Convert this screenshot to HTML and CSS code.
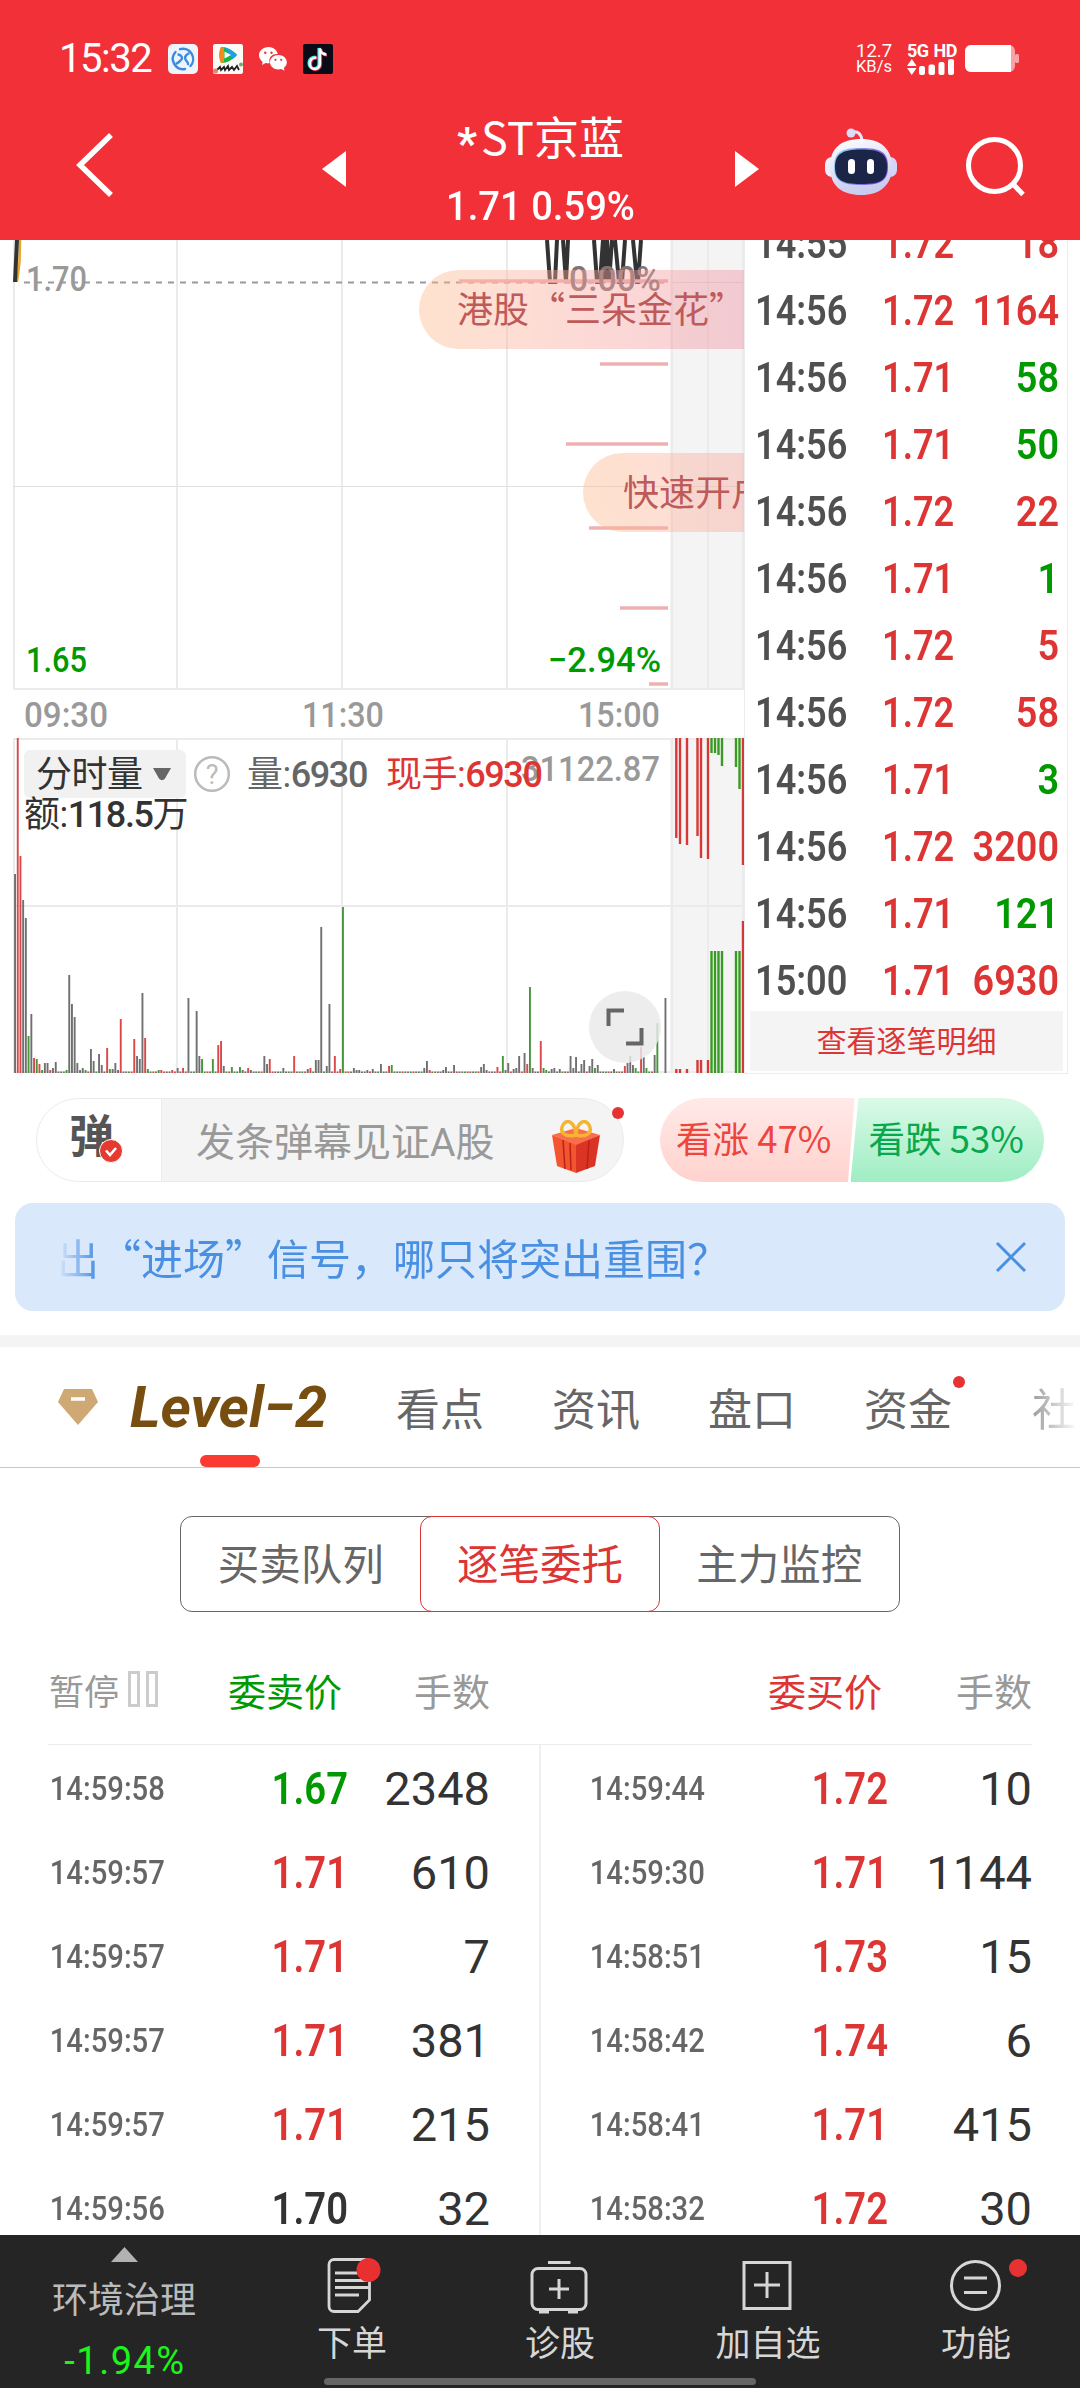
FILE: index.html
```
<!DOCTYPE html>
<html lang="zh-CN">
<head>
  <meta charset="UTF-8" />
  <title>*ST京蓝 - 分时</title>
  <link rel="stylesheet" href="styles.css">
</head>
<body>

  <header class="header">
    <div class="statusbar">
      <span class="clock">15:32</span>
      <svg class="app" width="30" height="30" viewBox="0 0 30 30">
        <rect width="30" height="30" rx="5" fill="#eef4fb"/>
        <g fill="none" stroke="#3c8ae0" stroke-width="2.4" stroke-linecap="round">
          <path d="M12 5.200A10.300 10.300 0 0 1 22.500 22"/>
          <path d="M17 25A10.300 10.300 0 0 1 7.500 8"/>
          <path d="M10.500 10.500c3.500 1 4.500 3.500 2.500 5.500s-2.500 3-4.500 3.500"/>
          <path d="M20.500 9.500c-3.500 2-4 4-3 6s3 3 2.500 4.500"/>
        </g>
      </svg>
      <svg class="app" width="30" height="30" viewBox="0 0 30 30">
        <rect width="30" height="30" rx="2" fill="#fbfaf6"/>
        <path d="M8 3c6 0 12 3.500 16 8-4 4.500-10 8-16 8-2-5-2-11 0-16z" fill="#17b63c"/>
        <path d="M8 3C5.500 8 5.500 14 8 19l3-1V4z" fill="#f58a1c"/>
        <path d="M11 3.500C16 4 21 8 24 11l-5 4.500-2-5z" fill="#1ba0f0"/>
        <path d="M11.500 7.500l6.500 3.500-6.500 3.500z" fill="#fff"/>
        <path d="M4 26l3-3 1 3 3-3 1 3 3-4 1 4 3-3 2 3 3-4 2 4" fill="none" stroke="#222" stroke-width="1.800"/>
        <circle cx="2.500" cy="27" r="2.500" fill="#dc8a78"/>
        <circle cx="28" cy="20.500" r="2" fill="#7da36a"/>
      </svg>
      <svg class="app" width="30" height="30" viewBox="0 0 30 30">
        <path d="M10.500 3C5 3 1 6.700 1 11.300c0 2.600 1.400 4.900 3.600 6.400L4 21l3.700-1.900c4 1 .5 0 4 .2C10 12.500 15 9.700 19.800 10 19 6 15.200 3 10.500 3z" fill="#fff"/>
        <path d="M20.400 11c-4.700 0-8.400 3.200-8.400 7.200s3.700 7.200 8.400 7.200c1 0 2-.1 2.900-.4l3.200 1.700-.7-2.900c1.900-1.400 3-3.300 3-5.600 0-4-3.700-7.200-8.400-7.200z" fill="#fff"/>
        <g fill="#f13038"><circle cx="7.300" cy="8.800" r="1.200"/><circle cx="13.500" cy="8.800" r="1.200"/><circle cx="17.500" cy="15.800" r="1.100"/><circle cx="23.200" cy="15.800" r="1.100"/></g>
      </svg>
      <svg class="app" width="30" height="30" viewBox="0 0 30 30">
        <rect width="30" height="30" rx="2" fill="#0b0b18"/>
        <g fill="none" stroke-width="3.200">
          <path d="M12.500 13c-4 0-6.500 2.500-6.500 6s2.500 5.500 5 5.500 5-2 5-5V4c.5 3 3 6 6.500 6" stroke="#25e8e4"/>
          <path d="M14 14c-4 0-6.500 2.500-6.500 6s2.500 5.500 5 5.500 5-2 5-5V5c.5 3 3 6 6.500 6" stroke="#f6355c"/>
          <path d="M13.300 13.500c-4 0-6.500 2.500-6.500 6s2.500 5.500 5 5.500 5-2 5-5V4.500c.5 3 3 6 6.500 6" stroke="#fff" stroke-width="2.600"/>
        </g>
      </svg>
      <div class="speed"><span>12.7</span><span>KB/s</span></div>
      <div class="signal">
        <span>5G HD</span>
        <svg width="48" height="16" viewBox="0 0 48 16" fill="#fff">
          <path d="M0 7 4.800 0l4.800 7zM0 9h9.600l-4.800 7z"/>
          <rect x="12" y="7" width="6" height="9" rx="2"/><rect x="21.500" y="5.500" width="6.500" height="10.500" rx="2"/>
          <rect x="31.500" y="3" width="6" height="13" rx="2"/><rect x="41" y="0" width="6" height="16" rx="2"/>
        </svg>
      </div>
      <svg class="battery" width="55" height="28" viewBox="0 0 55 28">
        <rect width="50" height="27" rx="6" fill="#fff" opacity=".55"/>
        <rect x="50" y="9" width="4" height="9" rx="1.500" fill="#fff" opacity=".55"/>
        <path d="M6 0h40v27H6a6 6 0 0 1-6-6V6a6 6 0 0 1 6-6z" fill="#fff"/>
      </svg>
    </div>
    <div class="titlebar">
      <svg class="back" width="40" height="66" viewBox="0 0 40 66"><path d="M37 3 6 33l31 30" fill="none" stroke="#fff" stroke-width="5.500"/></svg>
      <svg class="prev" width="24" height="36"><path d="M0 18 24 0v36z" fill="#fff"/></svg>
      <div class="stock">
        <div class="name"><span class="star">*</span>ST京蓝</div>
        <div class="quote">1.71 0.59%</div>
      </div>
      <svg class="next" width="24" height="36"><path d="M24 18 0 0v36z" fill="#fff"/></svg>
      <svg class="robot" width="72" height="68" viewBox="0 0 72 68">
        <defs>
          <linearGradient id="shell" x1="0" y1="0" x2=".3" y2="1"><stop offset="0" stop-color="#fff"/><stop offset="1" stop-color="#c9cbf0"/></linearGradient>
          <linearGradient id="rim" x1="0" y1="0" x2="1" y2=".3"><stop offset="0" stop-color="#8fdcf5"/><stop offset="1" stop-color="#7a49d8"/></linearGradient>
        </defs>
        <path d="M27 4c6-1 9 2 10 8" fill="none" stroke="#e6e4fa" stroke-width="3"/>
        <circle cx="26" cy="5" r="4.500" fill="#dddcf6"/>
        <rect x="0" y="29" width="14" height="20" rx="7" fill="#eceefb"/>
        <rect x="58" y="29" width="14" height="20" rx="7" fill="#d5d5f5"/>
        <path d="M36 11c20 0 31 10 31 28S55 67 36 67 5 58 5 39s11-28 31-28z" fill="url(#shell)"/>
        <path d="M36 20c20 0 27 4 27 19 0 14-8 18-27 18S9 53 9 39c0-15 7-19 27-19z" fill="url(#rim)"/>
        <path d="M36 21.500c19 0 26 4 26 17.500s-7 17-26 17-26-4-26-17 7-17.500 26-17.500z" fill="#1b2547"/>
        <rect x="23" y="31" width="7" height="15" rx="3.500" fill="#fff"/><rect x="42" y="31" width="7" height="15" rx="3.500" fill="#fff"/>
      </svg>
      <svg class="search" width="62" height="62" viewBox="0 0 62 62" fill="none" stroke="#fff" stroke-width="5"><circle cx="29.500" cy="29.500" r="26"/><path d="M47.500 47.500 58 58.500"/></svg>
    </div>
  </header>

  <main>
    <section class="market">
      <svg class="chart" id="chart" width="731" height="835" viewBox="13 240 731 835">
        <defs>
          <linearGradient id="peach" x1="0" x2="1"><stop offset="0" stop-color="#fdb98a"/><stop offset=".2" stop-color="#fdb49a"/><stop offset="1" stop-color="#ee8aa6"/></linearGradient>
        </defs>
        <!-- grid -->
        <g fill="#f4f4f4"><rect x="670" y="240" width="74" height="450"/><rect x="670" y="738" width="74" height="335"/></g>
        <g stroke="#ebebeb" stroke-width="2">
          <path d="M14 240v450M177 240v450M342 240v450M507 240v450M672 240v450M708 240v450M743 240v450"/>
          <path d="M13 689h731M14 738v335M177 738v335M342 738v335M507 738v335M672 738v335M708 738v335M743 738v335M13 739h731M13 906h731M13 1072h731"/>
          <path d="M13 486.500h731" stroke="#e0e0e0" stroke-width="1"/>
        </g>
        <path d="M24 282.500h640" stroke="#999" stroke-width="2" stroke-dasharray="6 6"/>
        <path d="M673 282.500h70" stroke="#ddd" stroke-width="1"/>
        <!-- price line -->
        <path d="M20 240 19.500 262 17 282" fill="none" stroke="#e9a528" stroke-width="2.500"/>
        <path d="M17 240 15 282" stroke="#333" stroke-width="4"/>
        <path d="M547 240l3 42h5l2-42M563 240l3 42 2-42M594 240l3 42h3l3-42 2 42 2-42 2 42 3-42M615 240l4 42h3l3-42M633 240l4 42h1l3-42" fill="none" stroke="#333" stroke-width="4"/>
        <!-- chip distribution -->
        <path d="M459 281h209M600 364h68M566 444h102M589 528h79M620 608h48M649 684h19" stroke="#efb0b2" stroke-width="3.500"/>
        <g class="fig">
          <text x="26" y="291" fill="#999" textLength="61" lengthAdjust="spacingAndGlyphs">1.70</text>
          <text x="569" y="291" fill="#857372" textLength="92" lengthAdjust="spacingAndGlyphs">0.00%</text>
          <text x="26" y="672" fill="#090" textLength="61" lengthAdjust="spacingAndGlyphs">1.65</text>
          <text x="548" y="672" fill="#090" textLength="113" lengthAdjust="spacingAndGlyphs">−2.94%</text>
          <g fill="#999">
            <text x="24" y="727" textLength="84" lengthAdjust="spacingAndGlyphs">09:30</text>
            <text x="302" y="727" textLength="82" lengthAdjust="spacingAndGlyphs">11:30</text>
            <text x="578" y="727" textLength="82" lengthAdjust="spacingAndGlyphs">15:00</text>
            <text x="521" y="781" textLength="139" lengthAdjust="spacingAndGlyphs">31122.87</text>
          </g>
        </g>
        <!-- danmu -->
        <g opacity=".42">
          <rect x="419" y="270" width="370" height="79" rx="39.500" fill="url(#peach)"/>
          <rect x="583" y="453" width="370" height="79" rx="39.500" fill="url(#peach)"/>
        </g>
        <g class="danmu"><text x="457" y="323">港股“三朵金花”</text><text x="623" y="506">快速开户</text></g>
        <g id="bars"></g>
        <!-- volume toolbar -->
        <rect x="24" y="750" width="162" height="48" rx="6" fill="#f1f1f1"/>
        <path d="M153 768h18l-6 10.500q-3 3.500-6 0z" fill="#666"/>
        <circle cx="212" cy="774" r="16.800" fill="none" stroke="#bbb" stroke-width="2.500"/>
        <g class="legend">
          <text x="36" y="787" fill="#333">分时量</text>
          <text x="24" y="827" fill="#333">额:<tspan class="val">118.5</tspan>万</text>
          <text x="212" y="784" class="help" text-anchor="middle">?</text>
          <text x="247" y="787" fill="#666">量:<tspan class="val">6930</tspan></text>
          <text x="386" y="787" fill="#dd3434">现手:<tspan class="val">6930</tspan></text>
        </g>
        <circle cx="625" cy="1027" r="36" fill="#e9e9e9" opacity=".82"/>
        <path d="M624 1010.500h-15.500v15.500M626 1043.500h15.500v-15.500" fill="none" stroke="#666" stroke-width="4"/>
      </svg>
      <div class="ticks">
        <div id="tickList"></div>
        <div class="more">查看逐笔明细</div>
      </div>
    </section>

    <section class="chat">
      <div class="chat-box">
        <div class="chat-switch">弹
          <svg class="check" width="24" height="24" viewBox="0 0 24 24"><circle cx="12" cy="12" r="11.500" fill="#e43a30" stroke="#fff"/><path d="M7 11.500l4 4.500 6-7" fill="none" stroke="#fff" stroke-width="2.600"/></svg>
        </div>
        <div class="chat-input">发条弹幕见证A股</div>
        <svg class="gift" width="50" height="54" viewBox="0 0 50 54">
          <path d="M1 15 25 24v29L6 46z" fill="#f2552f"/><path d="M49 15 25 24v29l19-7z" fill="#dc3424"/>
          <path d="M1 15 25 8l24 7-24 10z" fill="#fb6e4c"/>
          <path d="M12 20l2 29M19 23l1 27M38 20l-2 29" stroke="#b92318" stroke-width="1.500"/>
          <path d="M25 15C14 18 8 12 12 5s12-3 13 10c1-13 9-17 13-10s-2 13-13 10z" fill="none" stroke="#f5b431" stroke-width="3.500"/>
        </svg>
        <i class="dot"></i>
      </div>
      <div class="vote">
        <div class="up">看涨 47%</div>
        <div class="down">看跌 53%</div>
      </div>
    </section>

    <section class="notice">
      <p>出“进场”信号，哪只将突出重围？</p>
      <svg width="32" height="32" viewBox="0 0 32 32"><path d="M2 2l28 28M30 2 2 30" stroke="#4a90e2" stroke-width="3"/></svg>
    </section>

    <nav class="tabs">
      <svg class="gem" width="42" height="38" viewBox="0 0 42 38"><path d="M7 1h28l6 13-20 23L1 14z" fill="#cfa873"/><path d="M14 11h14" stroke="#fff" stroke-width="3.500"/></svg>
      <span class="level">Level−2</span>
      <span class="tab">看点</span>
      <span class="tab">资讯</span>
      <span class="tab">盘口</span>
      <span class="tab">资金<i class="dot"></i></span>
      <span class="tab fade">社区</span>
    </nav>

    <div class="segment">
      <span>买卖队列</span><span class="active">逐笔委托</span><span>主力监控</span>
    </div>

    <section class="orders">
      <div class="orders-head">
        <span class="pause">暂停<svg width="31" height="36" fill="none" stroke="#ccc" stroke-width="3"><rect x="1.500" y="1.500" width="9" height="33"/><rect x="19.500" y="1.500" width="9" height="33"/></svg></span>
        <span class="green">委卖价</span><span>手数</span>
      </div>
      <div class="orders-head">
        <span></span><span class="red">委买价</span><span>手数</span>
      </div>
      <div class="orders-col" id="sells"></div>
      <div class="orders-col" id="buys"></div>
    </section>
  </main>

  <footer class="toolbar">
    <div class="sector">
      <svg width="27" height="15"><path d="M13.500 0 27 15H0z" fill="#b2b2b2"/></svg>
      <span>环境治理</span>
      <b>-1.94%</b>
    </div>
    <div class="tool">
      <svg width="60" height="60" viewBox="0 0 60 60" fill="none" stroke="#d6d6d6" stroke-width="2.800">
        <path d="M12 4.500h30.500a5 5 0 0 1 5 5V45L36 56.500H12a5 5 0 0 1-5-5v-42a5 5 0 0 1 5-5z"/><path d="M13 18h34M13 25.500h34M13 32.500h34M13 40h24"/>
        <circle cx="46.500" cy="15" r="12" fill="#e93030" stroke="none"/>
      </svg>
      <span>下单</span>
    </div>
    <div class="tool">
      <svg width="60" height="60" viewBox="0 0 60 60" fill="none" stroke="#d6d6d6" stroke-width="3">
        <rect x="2" y="13.500" width="54" height="41" rx="6"/><path d="M18 7.500h22.500M29 24v20M19 34h20M9 57h10M38 57h10"/>
      </svg>
      <span>诊股</span>
    </div>
    <div class="tool">
      <svg width="60" height="60" viewBox="0 0 60 60" fill="none" stroke="#d6d6d6" stroke-width="3"><rect x="6" y="7.500" width="46" height="46"/><path d="M29 17v26M16 30h26"/></svg>
      <span>加自选</span>
    </div>
    <div class="tool">
      <svg width="60" height="60" viewBox="0 0 60 60" fill="none" stroke="#d6d6d6" stroke-width="3"><circle cx="29.500" cy="30.500" r="24"/><path d="M18 23h23M18 37.500h23"/></svg>
      <span>功能</span>
      <i class="dot"></i>
    </div>
    <div class="homebar"></div>
  </footer>

  <script>
    // 分时成交: 时间 / 价格 / 手数 / 方向
    const ticks = [
      ["14:55", "1.72", "18", "red"], ["14:56", "1.72", "1164", "red"], ["14:56", "1.71", "58", "green"],
      ["14:56", "1.71", "50", "green"], ["14:56", "1.72", "22", "red"], ["14:56", "1.71", "1", "green"],
      ["14:56", "1.72", "5", "red"], ["14:56", "1.72", "58", "red"], ["14:56", "1.71", "3", "green"],
      ["14:56", "1.72", "3200", "red"], ["14:56", "1.71", "121", "green"], ["15:00", "1.71", "6930", "red"]
    ];
    document.getElementById("tickList").innerHTML = ticks.map(t =>
      `<div class="tick"><span>${t[0]}</span><span class="red">${t[1]}</span><span class="${t[3]}">${t[2]}</span></div>`
    ).join("");

    const sells = [
      ["14:59:58", "1.67", "2348", "green"], ["14:59:57", "1.71", "610", "red"], ["14:59:57", "1.71", "7", "red"],
      ["14:59:57", "1.71", "381", "red"], ["14:59:57", "1.71", "215", "red"], ["14:59:56", "1.70", "32", ""]
    ];
    const buys = [
      ["14:59:44", "1.72", "10", "red"], ["14:59:30", "1.71", "1144", "red"], ["14:58:51", "1.73", "15", "red"],
      ["14:58:42", "1.74", "6", "red"], ["14:58:41", "1.71", "415", "red"], ["14:58:32", "1.72", "30", "red"]
    ];
    function renderOrders(id, list) {
      document.getElementById(id).innerHTML = list.map(o =>
        `<div class="order"><span class="time">${o[0]}</span><span class="price ${o[3]}">${o[1]}</span><span class="num">${o[2]}</span></div>`
      ).join("");
    }
    renderOrders("sells", sells);
    renderOrders("buys", buys);

    // 分钟成交量: 序号 -> [高度, 颜色]  k 平 / r 涨 / g 跌
    const vol = {
      0:[199,"k"],1:[335,"r"],2:[217,"r"],3:[173,"k"],4:[155,"k"],5:[37,"g"],6:[59,"k"],7:[15,"r"],8:[14,"g"],9:[9,"r"],10:[3,"g"],
      11:[10,"k"],12:[10,"k"],13:[3,"r"],14:[5,"k"],15:[11,"k"],19:[3,"g"],20:[98,"k"],21:[69,"k"],22:[56,"k"],23:[10,"k"],24:[3,"k"],
      25:[5,"k"],26:[3,"g"],28:[24,"k"],29:[12,"k"],31:[19,"k"],32:[8,"k"],34:[25,"r"],35:[4,"g"],36:[4,"k"],37:[10,"k"],38:[3,"k"],
      39:[54,"r"],44:[34,"r"],45:[17,"k"],46:[14,"k"],47:[80,"k"],48:[35,"r"],49:[4,"g"],53:[3,"g"],54:[3,"r"],58:[3,"r"],60:[5,"k"],
      62:[5,"r"],64:[75,"k"],67:[62,"k"],68:[17,"k"],69:[14,"g"],73:[14,"g"],75:[28,"r"],76:[32,"r"],77:[7,"k"],80:[6,"g"],83:[6,"g"],
      84:[3,"k"],86:[5,"r"],87:[3,"k"],92:[17,"k"],93:[9,"k"],94:[14,"r"],99:[5,"k"],103:[17,"r"],108:[4,"k"],109:[5,"r"],111:[13,"k"],
      112:[13,"k"],113:[146,"k"],115:[7,"k"],116:[69,"k"],118:[17,"r"],120:[4,"r"],121:[166,"g"],125:[5,"k"],126:[3,"k"],127:[3,"k"],
      130:[3,"k"],132:[4,"k"],135:[9,"k"],138:[7,"r"],139:[8,"g"],151:[5,"k"],152:[12,"k"],153:[3,"r"],158:[3,"k"],159:[6,"k"],
      162:[8,"k"],172:[6,"k"],173:[9,"k"],174:[3,"k"],178:[6,"r"],180:[17,"g"],181:[3,"k"],182:[10,"k"],184:[4,"k"],185:[5,"k"],
      186:[17,"k"],188:[20,"k"],189:[9,"r"],190:[86,"g"],191:[5,"k"],194:[32,"r"],195:[5,"g"],196:[3,"g"],198:[4,"k"],199:[5,"k"],
      201:[4,"k"],205:[17,"k"],206:[5,"k"],207:[16,"k"],209:[9,"k"],210:[13,"k"],212:[7,"k"],213:[14,"k"],214:[5,"g"],215:[8,"k"],
      221:[4,"k"],225:[7,"r"],226:[10,"k"],227:[17,"k"],228:[8,"k"],229:[5,"g"],231:[26,"r"],232:[16,"k"],233:[5,"g"],236:[18,"k"],
      237:[50,"g"],240:[75,"k"]
    };
    const color = { k: "#707070", r: "#d9494b", g: "#45963c" };
    let rects = "";
    for (let i = 0; i <= 240; i++) {
      if (!vol[i] && i > 237) continue;
      const [h, c] = vol[i] || [1.5, "krgk"[i * 7 % 4]];
      rects += `<rect x="${(14.1 + i * 2.71).toFixed(1)}" y="${1073 - h}" width="1.9" height="${h}" fill="${color[c]}"/>`;
    }
    // 收盘竞价: x, 上方高度, 下方高度, 颜色
    const auction = [
      [676.3,100,4,"r"],[680,106,4,"r"],[687,107,4,"r"],[697.5,98,13,"r"],[701,120,13,"r"],[708,121,13,"r"],
      [711.5,15,122,"g"],[715,15,122,"g"],[718.5,17,122,"g"],[722,28,122,"g"],[736,29,122,"g"],[739.5,51,122,"g"],[743,127,152,"r"]
    ];
    const strong = { r: "#d63838", g: "#3a9a25" };
    auction.forEach(([x, up, down, c]) => {
      rects += `<rect x="${x - 1.2}" y="738" width="2.4" height="${up}" fill="${strong[c]}"/>`;
      rects += `<rect x="${x - 1.2}" y="${1073 - down}" width="2.4" height="${down}" fill="${strong[c]}"/>`;
    });
    document.getElementById("bars").innerHTML = rects;
  </script>

</body>
</html>
```
FILE: styles.css
```
* { box-sizing: border-box; }
body {
  margin: 0;
  width: 1080px;
  height: 2388px;
  overflow: hidden;
  display: flex;
  flex-direction: column;
  background: #fff;
  color: #333;
  font-family: Roboto, "Noto Sans CJK SC", sans-serif;
}
svg { display: block; flex: none; }
.red { color: #dd3434; }
.green { color: #090; }
.dot {
  position: absolute;
  width: 12px;
  height: 12px;
  border-radius: 50%;
  background: #e63232;
}

/* ===== header ===== */
.header {
  flex: none;
  height: 240px;
  background: #f13038;
  color: #fff;
}
.statusbar {
  display: flex;
  align-items: center;
  height: 74px;
  padding: 44px 60px 0 59px;
}
.clock {
  width: 109px;
  font-size: 40px;
  line-height: 32px;
  letter-spacing: -1.5px;
}
.app { margin-right: 15px; }
.speed, .signal {
  display: flex;
  flex-direction: column;
  line-height: 16px;
}
.speed {
  margin-left: auto;
  width: 51px;
  font-size: 18.5px;
}
.speed span + span { font-size: 16.5px; }
.signal {
  width: 58px;
  font-size: 18px;
  font-weight: 700;
  letter-spacing: -.5px;
  word-spacing: 1px;
}
.titlebar {
  display: flex;
  align-items: center;
  height: 166px;
}
.back { margin: 16px 208px 0 74px; }
.prev, .next { margin-top: 23px; }
.stock {
  width: 389px;
  padding-top: 27px;
  text-align: center;
}
.name {
  display: flex;
  justify-content: center;
  height: 66px;
  font: 45px/62px "Noto Sans CJK SC", sans-serif;
}
.star {
  margin: 8px 4px 0 0;
  font: 700 44px/62px Roboto, sans-serif;
}
.quote {
  height: 66px;
  font-size: 41px;
  font-weight: 500;
  line-height: 71px;
  transform: scaleX(.93);
}
.robot { margin: 10px 0 0 66px; }
.search { margin: 20px 0 0 68px; }

/* ===== chart ===== */
main { flex: 1; min-height: 0; overflow: hidden; }
.market {
  display: flex;
  height: 835px;
  padding-left: 13px;
}
.fig {
  font-size: 35px;
  font-weight: 500;
}
.legend {
  font-size: 36px;
  letter-spacing: -.5px;
}
.legend .val { font-weight: 500; letter-spacing: -1.4px; }
.legend .help { font-size: 27px; fill: #bbb; }
.danmu {
  font-family: "Noto Sans CJK SC", sans-serif;
  font-size: 36px;
  fill: #bf5a5a;
}
.ticks {
  display: flex;
  flex-direction: column;
  justify-content: flex-end;
  width: 324px;
  height: 834px;
  overflow: hidden;
  border: 1px solid #ececec;
  border-top: 0;
}
.tick {
  display: grid;
  grid-template-columns: 127px 80px 1fr;
  height: 67px;
  padding: 0 8px 0 10px;
  font-size: 42px;
  font-weight: 600;
  line-height: 74px;
  color: #505050;
}
/* 行情数字为窄体 */
.tick span { transform: scaleX(.86); transform-origin: left; }
.tick span:last-child { text-align: right; transform: scaleX(.9); transform-origin: right; }
.more {
  flex: none;
  height: 60px;
  margin: 0 4px 2px 5px;
  background: #f4f4f4;
  color: #dd3434;
  font-size: 30px;
  line-height: 62px;
  text-align: center;
}

/* ===== danmu input ===== */
.chat {
  display: flex;
  justify-content: space-between;
  margin: 23px 36px 21px;
}
.chat-box {
  position: relative;
  display: flex;
  align-items: center;
  width: 588px;
  height: 84px;
  border: 1px solid #ebebeb;
  border-radius: 42px;
  background: linear-gradient(90deg, #fff 124px, #ebebeb 124px, #ebebeb 125px, #f4f4f4 125px);
}
.chat-switch {
  position: relative;
  width: 124px;
  padding-left: 32px;
  color: #555;
  font-size: 45px;
  font-weight: 700;
  line-height: 76px;
  margin-top: -4px;
}
.check { position: absolute; left: 62px; top: 39px; }
.chat-input {
  padding-left: 35px;
  color: #999;
  font-size: 39px;
  margin-top: -3px;
}
.gift { margin-left: auto; margin-right: 22px; margin-top: 14px; }
.chat-box .dot { right: -1px; top: 8px; }
.vote {
  display: flex;
  width: 384px;
  height: 84px;
  overflow: hidden;
  border-radius: 42px;
  font: 36.5px/80px "Noto Sans CJK SC", sans-serif;
}
.up {
  width: 195px;
  padding-left: 16px;
  background: linear-gradient(#ffeae8, #ffd2ce);
  clip-path: polygon(0 0, 100% 0, 188px 100%, 0 100%);
  color: #ee453c;
}
.down {
  width: 194px;
  margin-left: -4px;
  padding-left: 18px;
  background: linear-gradient(#dafae8, #9fedc3);
  clip-path: polygon(8px 0, 100% 0, 100% 100%, 0 100%);
  color: #08a84c;
}
.notice {
  display: flex;
  align-items: center;
  justify-content: space-between;
  height: 108px;
  margin: 0 15px 24px;
  padding: 0 38px 0 42px;
  border-radius: 18px;
  background: #dae8fb;
  color: #4a90e2;
}
.notice p {
  margin: 0;
  font: 42px/106px "Noto Sans CJK SC", sans-serif;
  -webkit-mask-image: linear-gradient(90deg, transparent, #000 40px);
  mask-image: linear-gradient(90deg, transparent, #000 40px);
}

/* ===== tabs ===== */
.tabs {
  position: relative;
  display: flex;
  align-items: center;
  height: 133px;
  padding-left: 57px;
  overflow: hidden;
  border-top: 12px solid #f4f4f4;
  border-bottom: 1px solid #c8c8c8;
}
.tabs::after {
  content: "";
  position: absolute;
  left: 200px;
  bottom: 0;
  width: 60px;
  height: 12px;
  border-radius: 6px;
  background: #fb3b32;
}
.gem { margin-right: 31px; }
.level {
  flex: none;
  width: 266px;
  color: #784d10;
  font-size: 58px;
  font-style: italic;
  font-weight: 700;
  white-space: nowrap;
}
.tab {
  position: relative;
  flex: none;
  width: 156px;
  color: #666;
  font-size: 44px;
}
.tab .dot { left: 89px; top: 1px; }
.tab.fade {
  margin-left: 12px;
  -webkit-mask-image: linear-gradient(90deg, rgba(0,0,0,.65), transparent 46px);
  mask-image: linear-gradient(90deg, rgba(0,0,0,.65), transparent 46px);
}
.segment {
  display: grid;
  grid-template: 94px / repeat(3, 1fr);
  width: 720px;
  height: 96px;
  margin: 48px auto 0;
  border: 1px solid #666;
  border-radius: 12px;
  color: #666;
  font-size: 41.5px;
  line-height: 98px;
  text-align: center;
}
.segment .active {
  height: 96px;
  margin: -1px 0;
  border: 1px solid #dd3434;
  border-radius: 12px;
  color: #dd3434;
}

/* ===== orders ===== */
.orders {
  display: grid;
  grid-template-columns: 491px 493px;
  margin: 0 48px;
}
.orders-head {
  display: grid;
  grid-template-columns: 180px 118px 1fr;
  align-items: center;
  height: 133px;
  padding-top: 22px;
  border-bottom: 1px solid #ececec;
  color: #999;
  font-size: 38px;
}
.orders-head span:last-child { text-align: right; }
.pause {
  display: flex;
  align-items: center;
  gap: 9px;
  padding-left: 1px;
  font-size: 35px;
}
.orders-col:nth-child(3), .orders-head:nth-child(1) { padding-right: 49px; }
.orders-head:nth-child(2) { padding-left: 49px; }
.orders-col:nth-child(4) { border-left: 2px solid #f0f0f0; padding-left: 47px; }
.order {
  display: grid;
  grid-template-columns: 180px 120px 1fr;
  align-items: center;
  height: 84px;
  padding-top: 2px;
}
.time {
  padding-left: 2px;
  color: #666;
  font-size: 34px;
  font-weight: 500;
  transform: scaleX(.86);
  transform-origin: left;
}
.price {
  text-align: right;
  font-size: 45px;
  font-weight: 600;
  transform: scaleX(.85);
  transform-origin: right;
}
.num {
  text-align: right;
  font-size: 47px;
}

/* ===== toolbar ===== */
.toolbar {
  position: relative;
  flex: none;
  display: flex;
  height: 153px;
  background: #252525;
  color: #d6d6d6;
}
.sector {
  display: flex;
  flex-direction: column;
  align-items: center;
  width: 248px;
  padding-top: 12px;
  color: #bbb;
  font-size: 36px;
}
.sector span { margin-top: 13px; line-height: 52px; }
.sector b {
  margin-top: 8px;
  padding-left: 2px;
  color: #1bf51b;
  font-size: 38px;
  font-weight: 400;
  line-height: 52px;
  letter-spacing: 1.5px;
}
.tool {
  position: relative;
  display: flex;
  flex-direction: column;
  align-items: center;
  width: 208px;
  padding-top: 20px;
  font-size: 35px;
}
.tool span { line-height: 52px; margin-top: 4px; }
.tool .dot { left: 137px; top: 24px; width: 18px; height: 18px; }
.homebar {
  position: absolute;
  left: 324px;
  bottom: 3px;
  width: 432px;
  height: 7px;
  border-radius: 4px;
  background: #666;
}
```
